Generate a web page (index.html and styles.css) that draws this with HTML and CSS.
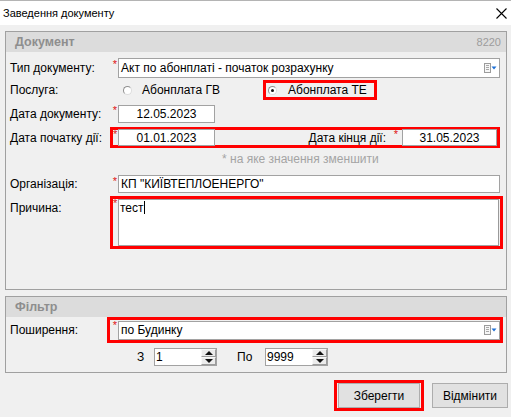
FILE: index.html
```html
<!DOCTYPE html>
<html lang="uk">
<head>
<meta charset="utf-8">
<title>Заведення документу</title>
<link rel="stylesheet" href="styles.css">
</head>
<body>
<div class="titlebar">
  <span class="title">Заведення документу</span>
  <svg class="close" viewBox="0 0 11 11" width="11" height="11"><path d="M0.5 0.5L10.5 10.5M10.5 0.5L0.5 10.5" stroke="#000" stroke-width="1.1" fill="none"/></svg>
</div>
<main class="content">
  <section class="panel doc">
    <header class="panel-head"><span class="name">Документ</span><span class="code">8220</span></header>

    <div class="row r1">
      <span class="lbl">Тип документу:</span>
      <div class="field">
        <span class="req">*</span>
        <div class="input combo">
          <span class="txt">Акт по абонплаті - початок розрахунку</span>
          <svg class="combo-ico" viewBox="0 0 13 10" width="13" height="10"><rect x="0.5" y="0.5" width="6" height="9" fill="#f6f6f6" stroke="#9c9c9c"/><path d="M2 2.5H5M2 4.5H5M2 6.5H5" stroke="#a8a8a8"/><path d="M7.5 3.5H12.5L10 6.5Z" fill="#1d6fd6"/></svg>
        </div>
      </div>
    </div>

    <div class="row r2">
      <span class="lbl">Послуга:</span>
      <span class="opt gv"><i class="radio"></i>Абонплата ГВ</span>
      <span class="opt te mark"><i class="radio on"></i>Абонплата ТЕ</span>
    </div>

    <div class="row r3">
      <span class="lbl">Дата документу:</span>
      <div class="field">
        <span class="req">*</span>
        <div class="input date">12.05.2023</div>
      </div>
    </div>

    <div class="row r4">
      <span class="lbl">Дата початку дії:</span>
      <div class="field mark dates">
        <span class="req in-mark">*</span>
        <div class="input date">01.01.2023</div>
        <span class="lbl-end">Дата кінця дії:</span>
        <span class="req end">*</span>
        <div class="input date end-date">31.05.2023</div>
      </div>
    </div>

    <div class="row r5">
      <span class="note">* на яке значення зменшити</span>
    </div>

    <div class="row r6">
      <span class="lbl">Організація:</span>
      <div class="field">
        <span class="req">*</span>
        <div class="input">КП "КИЇВТЕПЛОЕНЕРГО"</div>
      </div>
    </div>

    <div class="row r7">
      <span class="lbl top">Причина:</span>
      <div class="field mark reason">
        <span class="req in-mark">*</span>
        <div class="textarea">тест<span class="caret"></span></div>
      </div>
    </div>
  </section>

  <section class="panel filter">
    <header class="panel-head"><span class="name">Фільтр</span></header>

    <div class="row f1">
      <span class="lbl short">Поширення:</span>
      <div class="field mark spread">
        <span class="req">*</span>
        <div class="input combo">
          <span class="txt">по Будинку</span>
          <svg class="combo-ico" viewBox="0 0 13 10" width="13" height="10"><rect x="0.5" y="0.5" width="6" height="9" fill="#f6f6f6" stroke="#9c9c9c"/><path d="M2 2.5H5M2 4.5H5M2 6.5H5" stroke="#a8a8a8"/><path d="M7.5 3.5H12.5L10 6.5Z" fill="#1d6fd6"/></svg>
        </div>
      </div>
    </div>

    <div class="row f2">
      <span class="z">З</span>
      <div class="spin"><span class="val">1</span><span class="btns"><span class="b up"></span><span class="b down"></span></span></div>
      <span class="po">По</span>
      <div class="spin"><span class="val">9999</span><span class="btns"><span class="b up"></span><span class="b down"></span></span></div>
    </div>
  </section>

  <div class="actions">
    <span class="btn-mark"><button class="btn save">Зберегти</button></span>
    <button class="btn cancel">Відмінити</button>
  </div>
</main>
</body>
</html>
```
FILE: styles.css
```css
* { box-sizing: border-box; }
html, body { margin: 0; padding: 0; }
body {
  width: 511px;
  height: 417px;
  overflow: hidden;
  background: #f0f0f0;
  font-family: "Liberation Sans", Arial, sans-serif;
  font-size: 12px;
  color: #000;
}

.titlebar {
  height: 25px;
  background: #fff;
  border-top: 1px solid #b4b4b4;
  display: flex;
  align-items: center;
  justify-content: space-between;
  padding: 0 3px 0 3px;
}
.title { font-size: 11px; }
.close { display: block; margin-right: 1px; }

.content { padding: 6px 3px 0 5px; }

.panel {
  width: 502px;
  border: 1px solid #a0a0a0;
  display: flex;
  flex-direction: column;
}
.panel.doc { height: 259px; }
.panel.filter { height: 77px; margin-top: 6px; }

.panel-head {
  height: 20px;
  flex: none;
  background: #dcdcdc;
  display: flex;
  align-items: center;
  justify-content: space-between;
  padding: 0 5px 0 9px;
}
.panel-head .name { font-weight: bold; color: #8e8e8e; font-size: 12.5px; }
.panel-head .code { color: #9c9c9c; font-size: 11px; }

.row {
  display: flex;
  align-items: center;
  padding-left: 4px;
  flex: none;
}
.lbl { width: 100px; flex: none; white-space: nowrap; }
.lbl.short { width: 97px; }
.lbl.top { align-self: flex-start; padding-top: 5px; }

.field {
  display: flex;
  align-items: center;
  width: 390px;
  height: 100%;
}
.req {
  color: #e01010;
  font-size: 11px;
  line-height: 8px;
  width: 8px;
  padding-right: 1px;
  text-align: right;
  align-self: flex-start;
  padding-top: 2px;
  flex: none;
}
.req.in-mark { width: 5px; padding-top: 0; }
.req.end { width: 10px; padding-right: 4px; padding-top: 0; }

.input {
  height: 20px;
  flex: 1;
  background: #fff;
  border: 1px solid #a2a2a2;
  display: flex;
  align-items: center;
  padding: 0 2px;
  white-space: nowrap;
  overflow: hidden;
}
.combo .txt { flex: 1; }
.combo-ico { flex: none; margin-right: 0; }
.input.date {
  flex: none;
  width: 97px;
  height: 18px;
  justify-content: center;
}

.mark { border: 3px solid #ff0000; }

/* rows */
.r1 { margin-top: 6px; height: 20px; }
.r2 { margin-top: 2px; height: 20px; }
.r3 { margin-top: 4px; height: 20px; }
.r4 { margin-top: 3px; height: 21px; }
.r5 { height: 22px; }
.r6 { margin-top: 5px; height: 18px; }
.r6 .input { height: 18px; }
.r7 { margin-top: 3px; height: 53px; align-items: flex-start; }

.opt { display: flex; align-items: center; gap: 10px; white-space: nowrap; }
.opt.gv { margin-left: 13px; width: 140px; }
.opt.te { width: 114px; height: 20px; padding-left: 2px; gap: 11px; }
.radio {
  width: 9px;
  height: 9px;
  border-radius: 50%;
  border: 1px solid;
  border-color: #8f8f8f #dcdcdc #dcdcdc #8f8f8f;
  background: #fff;
  display: flex;
  align-items: center;
  justify-content: center;
  flex: none;
}
.radio.on::after {
  content: "";
  width: 3px;
  height: 3px;
  border-radius: 50%;
  background: #111;
}

.dates .input.date { height: 17px; }
.dates .end-date { width: 95px; }
.lbl-end { margin-left: auto; white-space: nowrap; padding-right: 6px; }

.note { margin-left: 212px; color: #a4a4a4; }

.reason { width: 393px; height: 53px; align-items: flex-start; }
.textarea {
  width: 381px;
  height: 47px;
  background: #fff;
  border: 1px solid #a2a2a2;
  border-right-color: #9a9a9a;
  padding: 1px 0 0 1px;
  line-height: 14px;
}
.caret {
  display: inline-block;
  width: 1px;
  height: 13px;
  background: #000;
  vertical-align: -2px;
}

/* filter */
.f1 { height: 26px; }
.spread { width: 396px; height: 26px; }
.spread .input { height: 19px; }
.spread .req { padding-top: 1px; }
.f2 { margin-top: 4px; height: 19px; }
.z { margin-left: 127px; width: 17px; }
.po { width: 48px; padding-left: 20px; }
.spin {
  width: 63px;
  height: 18px;
  background: #fff;
  border: 1px solid #a2a2a2;
  display: flex;
  flex: none;
}
.spin .val { flex: 1; line-height: 16px; padding-left: 1px; }
.spin .btns { width: 15px; display: flex; flex-direction: column; }
.spin .b {
  flex: 1;
  background: #ececec;
  border: 1px solid;
  border-color: #f8f8f8 #9c9c9c #9c9c9c #f8f8f8;
  display: flex;
  align-items: center;
  justify-content: center;
}
.spin .b::after { content: ""; width: 0; height: 0; border-left: 4px solid transparent; border-right: 4px solid transparent; }
.spin .up::after { border-bottom: 4px solid #111; }
.spin .down::after { border-top: 4px solid #111; }

.actions {
  display: flex;
  justify-content: flex-end;
  align-items: center;
  margin-top: 7px;
}
.btn-mark {
  border: 3px solid #ff0000;
  padding: 0 1px;
  display: flex;
}
.btn {
  height: 25px;
  background: #e1e1e1;
  border: 1px solid #adadad;
  font-family: "Liberation Sans", Arial, sans-serif;
  font-size: 12px;
  color: #000;
  padding: 0;
  margin: 0;
}
.btn.save { width: 82px; }
.btn.cancel { width: 76px; margin-left: 8px; }
```
